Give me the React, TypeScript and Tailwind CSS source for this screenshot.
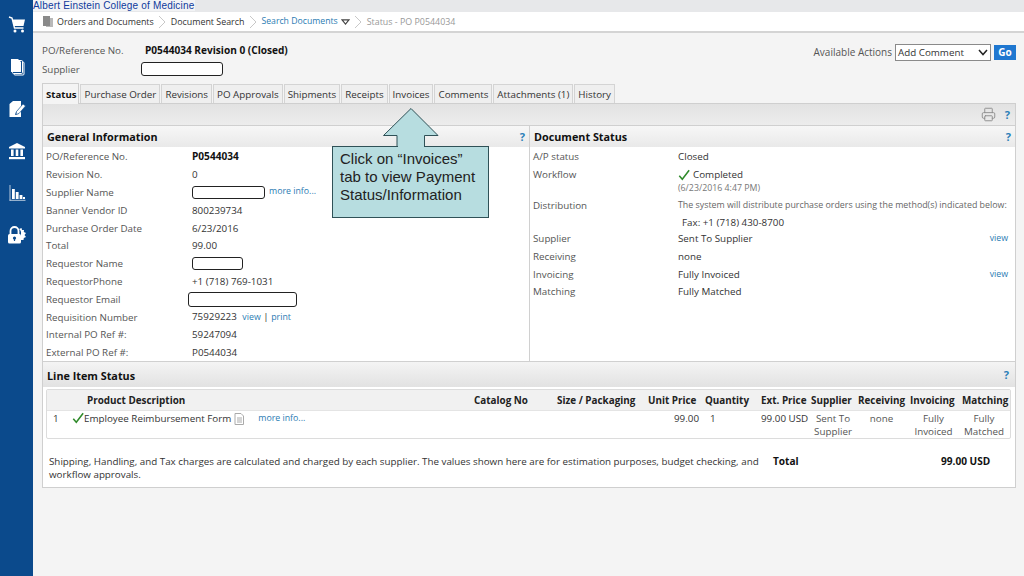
import React from "react";
import { Printer } from "lucide-react";

const Box = ({ w, h = "h-[14px]" }: { w: string; h?: string }) => (
  <span className={`block ${w} ${h} bg-white border border-[#222] rounded-[3px]`} />
);

const Help = () => <span className="font-bold text-[#2a7fb8] text-[11px] leading-none">?</span>;

const Check = ({ size = 12 }: { size?: number }) => (
  <svg width={size} height={size} viewBox="0 0 14 14" className="shrink-0">
    <path d="M1.500 8 L5 12 L13 1.500" fill="none" stroke="#2f8a2a" strokeWidth="1.8" />
  </svg>
);

const Chevron = () => (
  <svg width="8" height="14" viewBox="0 0 8 14" className="mx-[4.5px]">
    <path d="M1 1 L7 7 L1 13" fill="none" stroke="#c8c8c8" strokeWidth="1" />
  </svg>
);

// sidebar icons
const CartIcon = () => (
  <svg width="18" height="18" viewBox="0 0 18 18" fill="#fff">
    <path d="M1 1 L4 2 L6.500 12 H15.500" fill="none" stroke="#fff" strokeWidth="1.400" />
    <path d="M4.500 3.500 H17 L15.500 10 H6 Z" />
    <circle cx="7" cy="15" r="1.500" />
    <circle cx="14.500" cy="15" r="1.500" />
  </svg>
);

const DocsIcon = () => (
  <svg width="18" height="18" viewBox="0 0 18 18">
    <rect x="6" y="4" width="10" height="13" rx="1" fill="#0b4a8c" stroke="#fff" />
    <rect x="4.500" y="2.500" width="10" height="13" rx="1" fill="#0b4a8c" stroke="#fff" />
    <path d="M3 1 H10 L13 4 V13.500 Q13 14 12.500 14 H3.500 Q3 14 3 13.500 Z" fill="#fff" />
  </svg>
);

const EditIcon = () => (
  <svg width="18" height="18" viewBox="0 0 18 18">
    <path d="M1.500 4 L5 1 H13 V6.500 L8 12 L7 15 L10 14 L13 11 V17 H1.500 Z" fill="#fff" />
    <path d="M8.500 11.500 L15 4 L17.500 6 L11 13.500 L8 14.500 Z" fill="#fff" stroke="#0b4a8c" strokeWidth="0.6" />
  </svg>
);

const BankIcon = () => (
  <svg width="18" height="18" viewBox="0 0 18 18" fill="#fff">
    <path d="M9 1 L17 5 V6.500 H1 V5 Z" />
    <rect x="3" y="7.500" width="2.600" height="6.500" />
    <rect x="7.700" y="7.500" width="2.600" height="6.500" />
    <rect x="12.400" y="7.500" width="2.600" height="6.500" />
    <rect x="1" y="15" width="16" height="2.200" />
  </svg>
);

const ChartIcon = () => (
  <svg width="18" height="18" viewBox="0 0 18 18" fill="#fff">
    <rect x="1.500" y="1" width="1" height="15.500" opacity="0.7" />
    <rect x="1.500" y="15.800" width="16" height="1" opacity="0.7" />
    <rect x="4" y="5" width="2.800" height="10" />
    <rect x="7.800" y="8" width="2.800" height="7" />
    <rect x="11.600" y="11" width="2.800" height="4" />
    <rect x="15" y="13" width="2" height="2" />
  </svg>
);

const LockIcon = () => (
  <svg width="20" height="18" viewBox="0 0 20 18" fill="#fff">
    <path d="M12 3 L14.500 2 L15 4 L17 4 L16.800 6 L19 7 L17.500 9 L19 11 L16.800 12 L16.500 14 L14 14 V6 Q14 4.500 12 3 Z" />
    <path d="M3.500 8 V5 A4 4 0 0 1 11.500 5 V8" fill="none" stroke="#fff" strokeWidth="1.800" />
    <rect x="1" y="8" width="13" height="9.500" rx="1.500" />
    <circle cx="7.500" cy="12" r="1.600" fill="#0b4a8c" />
    <rect x="6.900" y="12" width="1.200" height="3" fill="#0b4a8c" />
  </svg>
);

const tabs = ["Purchase Order", "Revisions", "PO Approvals", "Shipments", "Receipts", "Invoices", "Comments", "Attachments (1)", "History"];

const General = () => {
  const rows: [string, React.ReactNode][] = [
    ["PO/Reference No.", <b className="text-[#111] text-[10.1px]">P0544034</b>],
    ["Revision No.", "0"],
    ["Supplier Name", <span className="flex items-center gap-[4px]"><Box w="w-[73px]" h="h-[13px]" /><a className="text-[#2b7cb3] text-[8.8px] -mt-[2px]">more info...</a></span>],
    ["Banner Vendor ID", "800239734"],
    ["Purchase Order Date", "6/23/2016"],
    ["Total", "99.00"],
    ["Requestor Name", <Box w="w-[51px]" h="h-[13px]" />],
    ["RequestorPhone", "+1 (718) 769-1031"],
    ["Requestor Email", <span className="block -ml-[4px]"><Box w="w-[109px]" h="h-[15px]" /></span>],
    ["Requisition Number", <span>75929223 <a className="text-[#2b7cb3] text-[8.8px] ml-[3px]">view</a> | <a className="text-[#2b7cb3] text-[8.8px]">print</a></span>],
    ["Internal PO Ref #:", "59247094"],
    ["External PO Ref #:", "P0544034"],
  ];
  return (
    <div className="grid grid-cols-[146px_1fr] auto-rows-[17.8px] items-center pl-[3px] pt-[1px]">
      {rows.map(([label, value]) => (
        <React.Fragment key={label}>
          <span className="text-[#555] whitespace-nowrap">{label}</span>
          <span className="whitespace-nowrap">{value}</span>
        </React.Fragment>
      ))}
    </div>
  );
};

const DocRow = ({ label, children, right, className = "h-[17.8px]" }: { label: string; children: React.ReactNode; right?: string; className?: string }) => (
  <div className={`flex items-center ${className}`}>
    <span className="w-[145px] shrink-0 text-[#555]">{label}</span>
    <span className="flex-1 whitespace-nowrap">{children}</span>
    {right && <a className="text-[#2b7cb3] text-[8.8px] pr-[7px]">{right}</a>}
  </div>
);

const PanelHead = ({ title }: { title: string }) => (
  <div className="h-[21px] flex items-center justify-between px-[4px] bg-gradient-to-b from-[#f7f7f7] to-[#e9e9e9]">
    <b className="text-[#111] text-[10.8px]">{title}</b>
    <Help />
  </div>
);

const col = "grid grid-cols-[37px_390px_83px_91px_57px_56px_50px_47px_52px_52px_49px]";

export default function App() {
  return (
    <div className="w-[1024px] h-[576px] overflow-hidden flex bg-[#f4f4f4] text-[#333] text-[9.8px] leading-[13px] font-['Open_Sans',sans-serif] relative">
      <aside className="w-[33px] shrink-0 bg-[#0b4a8c] flex flex-col items-center text-white pt-[16px] gap-[24px]">
        <CartIcon />
        <DocsIcon />
        <EditIcon />
        <BankIcon />
        <ChartIcon />
        <LockIcon />
      </aside>

      <main className="flex-1 min-w-0 flex flex-col">
        <div className="h-[12px] bg-[#e7e8ea] leading-[11px]">
          <span className="inline-block bg-[#f2f3f5] text-[#0e3a9c] text-[10px] tracking-[0.18px] font-['Liberation_Sans',sans-serif] pr-[1px]">Albert Einstein College of Medicine</span>
        </div>
        <div className="h-[21px] bg-white border-b-2 border-[#d4d4d4] flex items-center pl-[10px] text-[8.9px]">
          <svg width="10" height="11" viewBox="0 0 10 11" className="mr-[4px]" fill="#8a8a8a">
            <rect x="3" y="2" width="7" height="9" opacity="0.6" />
            <rect x="0" y="0" width="7" height="10" />
          </svg>
          <span>Orders and Documents</span>
          <Chevron />
          <span>Document Search</span>
          <Chevron />
          <span className="text-[#2b7cb3] text-[8.7px]">Search Documents</span>
          <svg width="9" height="6" viewBox="0 0 10 7" className="ml-[3px]"><path d="M1 1 H9 L5 6 Z" fill="none" stroke="#444" strokeWidth="1.300" /></svg>
          <Chevron />
          <span className="text-[#999]">Status - PO P0544034</span>
        </div>

        <div className="px-[9px] flex-1 flex flex-col">
          <div className="flex justify-between h-[28px] items-end">
            <div className="flex items-center h-[14px] mb-[4px]">
              <span className="w-[103px] text-[#555]">PO/Reference No.</span>
              <b className="text-[#111] text-[10.1px]">P0544034 Revision 0 (Closed)</b>
            </div>
            <div className="flex items-center gap-[2px] mr-[-1px]">
              <span className="text-[#555] text-[10px] mr-[1px]">Available Actions</span>
              <span className="w-[96px] h-[17px] bg-white border border-[#8a8a8a] flex items-center justify-between pl-[2px] pr-[2px]">
                Add Comment
                <svg width="10" height="7" viewBox="0 0 10 7"><path d="M1 1 L5 5.500 L9 1" fill="none" stroke="#222" strokeWidth="1.500" /></svg>
              </span>
              <span className="ml-[1px] w-[22px] h-[15px] bg-[#1f77d0] text-white font-bold text-center leading-[15px] text-[10px]">Go</span>
            </div>
          </div>
          <div className="flex items-center h-[14px] mt-[1px] mb-[6px]">
            <span className="w-[99px] text-[#555]">Supplier</span>
            <Box w="w-[82px]" />
          </div>

          <div className="flex items-end h-[21px] gap-[1px]">
            <span className="h-[21px] pl-[3px] pr-[2px] bg-[#f4f4f4] border border-b-0 border-[#cfcfcf] font-bold text-[#111] flex items-center text-[9.6px] relative top-[1px]">Status</span>
            {tabs.map((t) => (
              <span key={t} className="h-[19px] px-[3px] bg-[#efefef] border border-b-0 border-[#d4d4d4] flex items-center whitespace-nowrap">{t}</span>
            ))}
          </div>

          <div className="w-[974px] h-[385px] border border-[#cfcfcf] flex flex-col bg-[#f4f4f4]">
            <div className="h-[21px] shrink-0 bg-gradient-to-b from-[#e2e2e2] to-[#ededed] flex items-center justify-end gap-[9px] pr-[5px]">
              <Printer size={15} strokeWidth={1.500} className="text-[#8e8e8e]" />
              <Help />
            </div>
            <div className="flex h-[237px] shrink-0 border-y border-[#d0d0d0] gap-[1px] bg-[#d0d0d0]">
              <section className="w-[486px] bg-white overflow-hidden">
                <PanelHead title="General Information" />
                <General />
              </section>
              <section className="flex-1 bg-white overflow-hidden">
                <PanelHead title="Document Status" />
                <div className="pl-[3px] pt-[1px]">
                  <DocRow label="A/P status">Closed</DocRow>
                  <DocRow label="Workflow">
                    <span className="flex items-center gap-[3px]"><Check />Completed</span>
                  </DocRow>
                  <div className="h-[9px] pl-[145px] text-[8.800px] leading-[8px] text-[#777]">(6/23/2016 4:47 PM)</div>
                  <DocRow label="Distribution" className="h-[22px] pt-[3px]">
                    <span className="text-[#666] text-[8.86px]">The system will distribute purchase orders using the method(s) indicated below:</span>
                  </DocRow>
                  <DocRow label="" className="h-[15px]"><span className="pl-[4px]">Fax: +1 (718) 430-8700</span></DocRow>
                  <DocRow label="Supplier" right="view">Sent To Supplier</DocRow>
                  <DocRow label="Receiving">none</DocRow>
                  <DocRow label="Invoicing" right="view">Fully Invoiced</DocRow>
                  <DocRow label="Matching">Fully Matched</DocRow>
                </div>
              </section>
            </div>
            <section className="flex-1 bg-white">
              <div className="h-[25px] pt-[1px] flex items-center justify-between px-[4px] bg-gradient-to-b from-[#f4f4f4] to-[#e2e2e2]">
                <b className="text-[#111] text-[10.8px]">Line Item Status</b>
                <span className="pr-[2px]"><Help /></span>
              </div>
              <div className="ml-[3px] mt-[2px] w-[965px] border border-[#dcdcdc] rounded-[2px]">
                <div className={`${col} h-[20px] items-center bg-[#f1f1f1] font-bold text-[9.900px] text-[#222] whitespace-nowrap`}>
                  <span />
                  <span className="pl-[3px]">Product Description</span>
                  <span>Catalog No</span>
                  <span>Size / Packaging</span>
                  <span>Unit Price</span>
                  <span>Quantity</span>
                  <span>Ext. Price</span>
                  <span>Supplier</span>
                  <span>Receiving</span>
                  <span>Invoicing</span>
                  <span>Matching</span>
                </div>
                <div className={`${col} h-[28px] pt-[1px] text-center border-t border-[#e4e4e4]`}>
                  <span className="flex items-start gap-[13px] pl-[6px] text-left text-[#333]">1 <Check /></span>
                  <span className="flex items-start text-left whitespace-nowrap">
                    Employee Reimbursement Form
                    <svg width="10" height="12" viewBox="0 0 10 12" className="ml-[3px] mt-[1px]"><path d="M1 .5 H7 L9.500 3 V11.500 H1 Z M3 5 H8 M3 7 H8 M3 9 H8" fill="none" stroke="#aaa" /></svg>
                    <a className="text-[#2b7cb3] text-[8.8px] ml-[14px]">more info...</a>
                  </span>
                  <span />
                  <span />
                  <span className="text-right pr-[6px]">99.00</span>
                  <span className="text-left pl-[5px]">1</span>
                  <span className="text-left whitespace-nowrap">99.00 USD</span>
                  <span className="text-[#555] pr-[3px]">Sent To Supplier</span>
                  <span className="text-[#555] pr-[5px]">none</span>
                  <span className="text-[#555] pr-[5px]">Fully Invoiced</span>
                  <span className="text-[#555] pr-[5px]">Fully Matched</span>
                </div>
              </div>
              <div className="flex mt-[16px] pl-[6px]">
                <p className="w-[724px]">Shipping, Handling, and Tax charges are calculated and charged by each supplier. The values shown here are for estimation purposes, budget checking, and workflow approvals.</p>
                <b className="text-[#111] text-[10.1px] w-[168px]">Total</b>
                <b className="text-[#111] text-[10.1px]">99.00 USD</b>
              </div>
            </section>
          </div>
        </div>
      </main>

      <div className="absolute left-[332px] top-[108px] w-[157px] h-[110px]">
        <svg width="157" height="39" viewBox="0 0 157 39" className="absolute left-0 top-0">
          <path d="M79 .5 L106 27.500 H92.500 V38.500 H65 V27.500 H51.500 Z" fill="#b7dde0" stroke="#2f5157" />
        </svg>
        <div className="absolute left-0 top-[38px] w-[157px] h-[72px] bg-[#b7dde0] border border-[#2f5157] px-[7px] pt-[3px] font-['Liberation_Sans',sans-serif] text-[15px] leading-[18px] text-[#222]">
          Click on “Invoices” tab to view Payment Status/Information
        </div>
        <div className="absolute left-[66px] top-[37px] w-[26px] h-[2px] bg-[#b7dde0]" />
      </div>
    </div>
  );
}
